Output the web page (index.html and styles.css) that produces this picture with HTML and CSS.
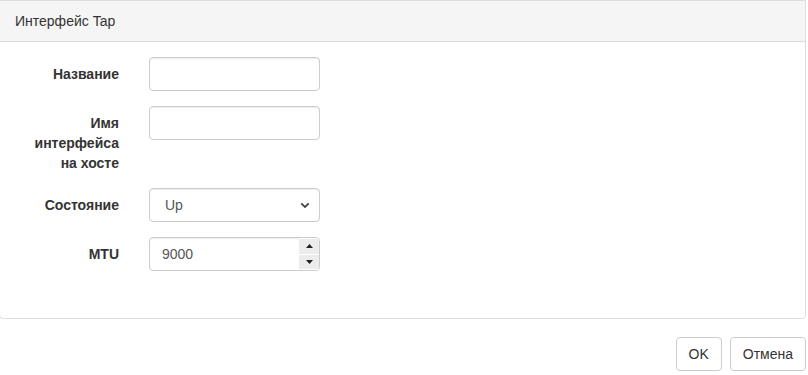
FILE: index.html
```html
<!DOCTYPE html>
<html lang="ru">
<head>
    <meta charset="UTF-8">
    <meta name="viewport" content="width=device-width, initial-scale=1.0">
    <title>Интерфейс Tap</title>
    <link rel="stylesheet" href="styles.css">
</head>
<body>
    <div class="panel">
        <div class="panel-heading">Интерфейс Tap</div>
        <div class="panel-body">
            <form class="form">
                <div class="form-group">
                    <label class="control-label">Название</label>
                    <div class="control">
                        <input class="form-control" type="text">
                    </div>
                </div>

                <div class="form-group">
                    <label class="control-label">Имя интерфейса на хосте</label>
                    <div class="control">
                        <input class="form-control" type="text">
                    </div>
                </div>

                <div class="form-group">
                    <label class="control-label">Состояние</label>
                    <div class="control">
                        <div class="select-wrap">
                            <select class="form-control select">
                                <option>Up</option>
                                <option>Down</option>
                            </select>
                            <svg class="chevron" width="10" height="7" viewBox="0 0 10 7">
                                <path d="M1.2 1.4 L5 5 L8.8 1.4" fill="none" stroke="#444" stroke-width="1.8"/>
                            </svg>
                        </div>
                    </div>
                </div>

                <div class="form-group">
                    <label class="control-label">MTU</label>
                    <div class="control">
                        <div class="number">
                            <input class="number-input" type="text" value="9000">
                            <div class="spin">
                                <div class="spin-btn">
                                    <svg width="7" height="4" viewBox="0 0 7 4"><path d="M0 4 L3.5 0 L7 4 Z" fill="#222"/></svg>
                                </div>
                                <div class="spin-btn">
                                    <svg width="7" height="4" viewBox="0 0 7 4"><path d="M0 0 L3.5 4 L7 0 Z" fill="#222"/></svg>
                                </div>
                            </div>
                        </div>
                    </div>
                </div>
            </form>
        </div>
    </div>

    <div class="footer">
        <button class="btn" type="button">OK</button>
        <button class="btn" type="button">Отмена</button>
    </div>
</body>
</html>
```

FILE: styles.css
```css
body {
    margin: 0;
    font-family: "Liberation Sans", Arial, sans-serif;
    font-size: 14px;
    line-height: 20px;
    color: #333;
    background: #fff;
}

.panel {
    width: 805px;
    margin-left: -1px;
    border: 1px solid #ddd;
    border-radius: 0 0 4px 4px;
    margin-bottom: 18px;
}

.panel-heading {
    background-color: #f5f5f5;
    border-bottom: 1px solid #ddd;
    padding: 10px 15px;
}

.panel-body {
    padding: 15px 0 32px;
}

.form-group {
    display: flex;
    margin-bottom: 15px;
}

.control-label {
    width: 98px;
    padding: 7px 15px 0 21px;
    text-align: right;
    font-weight: bold;
}

.control {
    width: 171px;
    padding-left: 15px;
}

.form-control {
    display: block;
    box-sizing: border-box;
    width: 100%;
    height: 34px;
    padding: 6px 12px;
    font: inherit;
    color: #555;
    background: #fff;
    border: 1px solid #ccc;
    border-radius: 4px;
    box-shadow: inset 0 1px 1px rgba(0, 0, 0, .075);
}

.select-wrap {
    position: relative;
}

.select {
    appearance: none;
    -webkit-appearance: none;
    padding-left: 15px;
}

.chevron {
    position: absolute;
    right: 10px;
    top: 14px;
    pointer-events: none;
}

.number {
    display: flex;
    height: 34px;
    box-sizing: border-box;
    border: 1px solid #ccc;
    border-radius: 4px;
    overflow: hidden;
    box-shadow: inset 0 1px 1px rgba(0, 0, 0, .075);
}

.number-input {
    flex: 1;
    min-width: 0;
    border: none;
    outline: none;
    padding: 6px 12px;
    font: inherit;
    color: #555;
    background: transparent;
}

.spin {
    width: 20px;
    display: flex;
    flex-direction: column;
    gap: 1px;
    background: #fff;
    padding: 1px 0 1px;
}

.spin-btn {
    flex: 1;
    display: flex;
    align-items: center;
    justify-content: center;
    background: #ececec;
}

.footer {
    display: flex;
    justify-content: flex-end;
    gap: 8px;
    padding-right: 2px;
}

.btn {
    height: 34px;
    padding: 6px 12px;
    font: inherit;
    color: #333;
    background: #fff;
    border: 1px solid #ccc;
    border-radius: 4px;
}
```
